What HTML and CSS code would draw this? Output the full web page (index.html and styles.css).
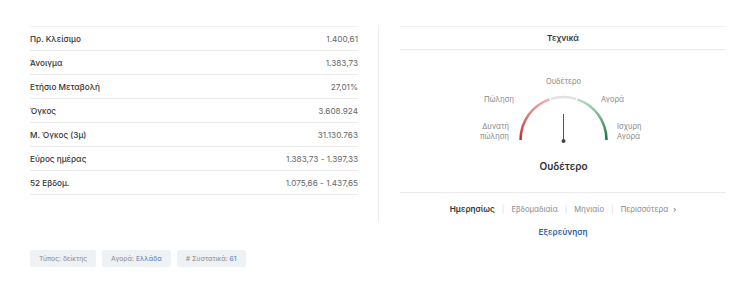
FILE: index.html
```html
<!DOCTYPE html>
<html lang="el">
<head>
    <meta charset="UTF-8">
    <meta name="viewport" content="width=device-width, initial-scale=1.0">
    <title>Στοιχεία δείκτη</title>
    <link rel="stylesheet" href="styles.css">
</head>
<body>

<div class="page">
    <div class="overview">
        <div class="stats">
            <div class="row"><span class="label">Πρ. Κλείσιμο</span><span class="value">1.400,61</span></div>
            <div class="row"><span class="label">Άνοιγμα</span><span class="value">1.383,73</span></div>
            <div class="row"><span class="label">Ετήσιο Μεταβολή</span><span class="value">27,01%</span></div>
            <div class="row"><span class="label">Όγκος</span><span class="value">3.608.924</span></div>
            <div class="row"><span class="label">Μ. Όγκος (3μ)</span><span class="value">31.130.763</span></div>
            <div class="row"><span class="label">Εύρος ημέρας</span><span class="value">1.383,73 - 1.397,33</span></div>
            <div class="row"><span class="label">52 Εβδομ.</span><span class="value">1.075,66 - 1.437,65</span></div>
        </div>

        <div class="divider"></div>

        <div class="technical">
            <div class="tech-title">Τεχνικά</div>
            <div class="gauge">
                <svg width="326" height="142" viewBox="0 0 326 142">
                    <defs>
                        <linearGradient id="sell" x1="0" y1="1" x2="0" y2="0">
                            <stop offset="0" stop-color="#c62a2a"/>
                            <stop offset="1" stop-color="#eab0b0"/>
                        </linearGradient>
                        <linearGradient id="buy" x1="0" y1="1" x2="0" y2="0">
                            <stop offset="0" stop-color="#17743d"/>
                            <stop offset="1" stop-color="#b7dfc5"/>
                        </linearGradient>
                    </defs>
                    <path d="M120.5 90 A43 43 0 0 1 149.5 49.34" fill="none" stroke="url(#sell)" stroke-width="2.5"/>
                    <path d="M150.93 48.88 A43 43 0 0 1 176.07 48.88" fill="none" stroke="#e2e2e2" stroke-width="2.5"/>
                    <path d="M177.5 49.34 A43 43 0 0 1 206.5 90" fill="none" stroke="url(#buy)" stroke-width="2.5"/>
                    <line x1="163.5" y1="64" x2="163.5" y2="90" stroke="#555" stroke-width="1"/>
                    <circle cx="163.5" cy="91" r="2" fill="#444"/>

                    <text class="g-label" x="163.5" y="34" text-anchor="middle">Ουδέτερο</text>
                    <text class="g-label" x="114" y="52" text-anchor="end">Πώληση</text>
                    <text class="g-label" x="201" y="52">Αγορά</text>
                    <text class="g-label" x="109" y="79" text-anchor="end">Δυνατή</text>
                    <text class="g-label" x="109" y="89" text-anchor="end">πώληση</text>
                    <text class="g-label" x="217" y="79">Ισχυρη</text>
                    <text class="g-label" x="217" y="89">Αγορά</text>
                    <text class="g-result" x="163.5" y="120" text-anchor="middle">Ουδέτερο</text>
                </svg>
            </div>
            <div class="tabs">
                <span class="tab active">Ημερησίως</span>
                <span class="sep">|</span>
                <span class="tab">Εβδομαδιαία</span>
                <span class="sep">|</span>
                <span class="tab">Μηνιαίο</span>
                <span class="sep">|</span>
                <span class="tab">Περισσότερα <span class="chev">›</span></span>
            </div>
            <div class="explore">Εξερεύνηση</div>
        </div>
    </div>

    <div class="tags">
        <span class="tag">Τύπος: δείκτης</span>
        <span class="tag">Αγορά: <span class="link">Ελλάδα</span></span>
        <span class="tag"># Συστατικά: <span class="link">61</span></span>
    </div>
</div>

</body>
</html>
```

FILE: styles.css
```css
body {
    margin: 0;
    background: #fff;
    font-family: Inter, "Noto Sans", sans-serif;
    color: #333;
}
.page {
    padding: 26px 9px 0 30px;
}
.overview {
    display: flex;
    align-items: flex-start;
}
.stats {
    width: 328px;
    border-top: 1px solid #f0f0f0;
}
.row {
    display: flex;
    justify-content: space-between;
    align-items: center;
    height: 23px;
    border-bottom: 1px solid #ebebeb;
    font-size: 8.2px;
}
.label {
    font-weight: 500;
    color: #333;
}
.value {
    color: #666;
}
.divider {
    width: 1px;
    height: 197px;
    margin: -1px 21px 0 20px;
    background: #eee;
}
.technical {
    width: 326px;
}
.tech-title {
    height: 22px;
    line-height: 22px;
    text-align: center;
    font-size: 8.2px;
    font-weight: 600;
    color: #333;
    border-top: 1px solid #f0f0f0;
    border-bottom: 1px solid #ebebeb;
}
.gauge {
    height: 142px;
    border-bottom: 1px solid #ebebeb;
}
.gauge svg {
    display: block;
}
.g-label {
    font-size: 7.5px;
    fill: #888;
}
.g-result {
    font-size: 10px;
    font-weight: 600;
    fill: #333;
}
.tabs {
    display: flex;
    justify-content: center;
    align-items: center;
    gap: 7px;
    margin-top: 11px;
    font-size: 8px;
    color: #888;
}
.tab {
    font-size: 7.6px;
}
.tab.active {
    font-size: 8.2px;
    font-weight: 600;
    color: #333;
}
.sep {
    color: #ddd;
}
.chev {
    margin-left: 3px;
    color: #555;
}
.explore {
    margin-top: 13px;
    text-align: center;
    font-size: 8.2px;
    font-weight: 600;
    color: #2f62a3;
}
.tags {
    display: flex;
    gap: 6px;
    margin-top: 13px;
}
.tag {
    padding: 4px 9px;
    background: #eff2f5;
    border-radius: 2px;
    font-size: 6.8px;
    color: #888;
}
.link {
    color: #4a7ab8;
}
```
